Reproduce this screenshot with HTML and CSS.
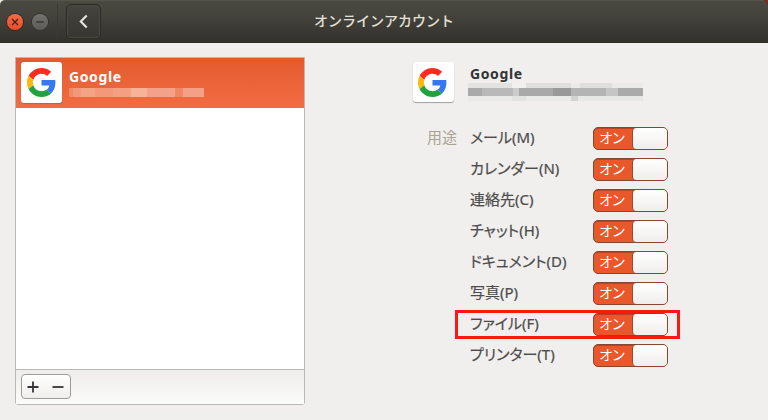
FILE: index.html
```html
<!DOCTYPE html>
<html lang="ja">
<head>
<meta charset="utf-8">
<title>オンラインアカウント</title>
<link rel="stylesheet" href="styles.css">
</head>
<body>
<svg class="defs" width="0" height="0" aria-hidden="true">
  <symbol id="google" viewBox="0 0 48 48">
    <path fill="#ff2a20" d="M24 9.5c3.54 0 6.71 1.22 9.21 3.6l6.85-6.85C35.9 2.38 30.47 0 24 0 14.62 0 6.51 5.38 2.56 13.22l7.98 6.19C12.43 13.72 17.74 9.5 24 9.5z"/>
    <path fill="#3577f5" d="M46.98 24.55c0-1.57-.15-3.09-.38-4.55H24v9.02h12.94c-.58 2.96-2.26 5.48-4.78 7.18l7.73 6c4.51-4.18 7.09-10.36 7.09-17.65z"/>
    <path fill="#fcb90d" d="M10.53 28.59c-.48-1.45-.76-2.99-.76-4.59s.27-3.14.76-4.59l-7.98-6.19C.92 16.46 0 20.12 0 24s.92 7.54 2.56 10.78l7.97-6.19z"/>
    <path fill="#22a13f" d="M24 48c6.48 0 11.93-2.13 15.89-5.81l-7.73-6c-2.15 1.45-4.92 2.3-8.16 2.3-6.26 0-11.57-4.22-13.47-9.91l-7.98 6.19C6.51 42.62 14.62 48 24 48z"/>
  </symbol>
</svg>
<header class="titlebar">
  <div class="controls">
    <span class="control close"><svg viewBox="0 0 16 16"><path d="M5 5l6 6M11 5l-6 6"/></svg></span>
    <span class="control minimize"><svg viewBox="0 0 16 16"><path d="M4 8h8"/></svg></span>
  </div>
  <button class="back"><svg viewBox="0 0 12 14"><path d="M9 1.5L3.5 7L9 12.5"/></svg></button>
  <h1 class="title">オンラインアカウント</h1>
</header>
<main class="content">
  <section class="sidebar">
    <div class="list">
      <div class="account selected">
        <span class="logo"><svg><use href="#google"/></svg></span>
        <div class="details"><strong class="name">Google</strong><span class="redacted light"></span></div>
      </div>
    </div>
    <div class="toolbar"><div class="buttons">
      <svg viewBox="0 0 12 12"><path d="M.5 6h11M6 .5v11"/></svg>
      <svg viewBox="0 0 12 12"><path d="M.5 6h11"/></svg>
    </div></div>
  </section>
  <section class="panel">
    <div class="account">
      <span class="logo"><svg><use href="#google"/></svg></span>
      <div class="details"><strong class="name">Google</strong><span class="redacted dark"></span></div>
    </div>
    <div class="services">
      <span class="caption">用途</span>
      <div class="rows">
        <div class="row"><span class="label">メール(M)</span><span class="switch"><b>オン</b><i></i></span></div>
        <div class="row"><span class="label">カレンダー(N)</span><span class="switch"><b>オン</b><i></i></span></div>
        <div class="row"><span class="label">連絡先(C)</span><span class="switch"><b>オン</b><i></i></span></div>
        <div class="row"><span class="label">チャット(H)</span><span class="switch"><b>オン</b><i></i></span></div>
        <div class="row"><span class="label">ドキュメント(D)</span><span class="switch"><b>オン</b><i></i></span></div>
        <div class="row"><span class="label">写真(P)</span><span class="switch"><b>オン</b><i></i></span></div>
        <div class="row marked"><span class="label">ファイル(F)</span><span class="switch"><b>オン</b><i></i></span></div>
        <div class="row"><span class="label">プリンター(T)</span><span class="switch"><b>オン</b><i></i></span></div>
      </div>
    </div>
  </section>
</main>
</body>
</html>
```
FILE: styles.css
```css
*, *::after { box-sizing: border-box; }
body { margin: 0; height: 420px; overflow: hidden; background: #f0efed; color: #4c4c4c; font: 15px/20px "Noto Sans", "Noto Sans CJK JP", sans-serif; }
.defs { position: absolute; }
svg { display: block; }
.titlebar { position: relative; height: 43px; display: flex; align-items: center; background: linear-gradient(#4a4941, #45443d 30%, #32312d); border-top: 1px solid #55544c; border-bottom: 1px solid #2c2b28; border-top-left-radius: 5px; }
.titlebar::after { content: ""; position: absolute; top: -1px; right: 0; width: 5px; height: 4px; background: #7b2c22; clip-path: polygon(0 0, 100% 0, 100% 100%); }
.controls { display: flex; gap: 9px; width: 58px; height: 35px; padding-left: 7px; align-items: center; border-right: 1px solid #3a3934; }
.control { width: 16px; height: 16px; border-radius: 50%; }
.control svg { width: 16px; height: 16px; fill: none; stroke: #43251c; stroke-width: 1.4; }
.close { background: linear-gradient(#f76b47, #ec4b27); box-shadow: 0 0 0 1px #3a2b24; }
.minimize { background: linear-gradient(#74736f, #5d5c58); box-shadow: 0 0 0 1px #363530; }
.minimize svg { stroke: #35342f; }
.back { width: 35px; height: 35px; margin: 0 0 0 8px; padding: 0; display: grid; place-items: center; background: linear-gradient(#45443e, #363530); border: 1px solid #2b2a26; border-radius: 5px; box-shadow: inset 0 0 0 1px #4a4943; }
.back svg { width: 13px; height: 15px; fill: none; stroke: #e5e4df; stroke-width: 2; }
.title { position: absolute; inset: 0; margin: 0; text-align: center; font-size: 14px; line-height: 40px; font-weight: 500; color: #e3e0d8; }
.content { display: flex; align-items: flex-start; padding: 14px 0 0 15px; }
.sidebar { width: 290px; height: 348px; border: 1px solid #bbb9b6; border-radius: 0 0 3px 3px; display: flex; flex-direction: column; }
.list { height: 312px; background: #fff; border-bottom: 1px solid #bbb9b6; }
.account { display: flex; }
.selected { height: 50px; padding: 4px 0 0 5px; background: linear-gradient(#e45a2e, #f26c43); color: #fff; }
.logo { width: 41px; height: 41px; display: grid; place-items: center; border-radius: 3px; background: #fff; box-shadow: 0 1px 1px #6f6b6899; flex: none; }
.logo svg { width: 29px; height: 29px; }
.details { display: flex; flex-direction: column; }
.name { font-size: 14px; line-height: 20px; letter-spacing: .6px; }
.selected .details { margin-left: 7px; padding-top: 5px; }
.redacted { display: block; filter: blur(.6px); }
.light { width: 135px; height: 9px; margin-top: 1px; background: linear-gradient(90deg, #ef8a66 0 4px, #f3997a 4px 12px, #f4a284 12px 26px, #f3997a 26px 44px, #f49f81 44px 62px, #f7b297 62px 78px, #f3a188 78px 106px, #ef8864 106px 114px, #f4a087 114px); }
.toolbar { flex: 1; padding: 4px 5px; background: linear-gradient(#eeedeb, #fbfbfa); }
.buttons { width: 50px; height: 25px; display: flex; align-items: center; gap: 13px; padding-left: 5px; border: 1px solid #9d9c99; border-radius: 4px; background: linear-gradient(#fff, #efeeec); }
.buttons svg { width: 12px; height: 12px; fill: none; stroke: #353438; stroke-width: 1.8; }
.panel { margin-left: 107.5px; padding-top: 5px; }
.panel .logo { height: 40px; }
.panel .logo svg { margin-right: 1px; }
.panel .account { height: 41px; }
.panel .details { margin-left: 16.5px; color: #333; padding-top: 2px; }
.dark { width: 175px; height: 18px; margin: -1px 0 0 -2px; background: linear-gradient(90deg, #aaa 0 14px, #b9b9b9 14px 45px, #ccc 45px 51px, #a9a9a9 51px 85px, #999 85px 103px, #b4b4b4 103px 138px, #c5c5c5 138px 150px, #aaa 150px) 0 5px / 100% 8px no-repeat, linear-gradient(90deg, #e2e2e1 0 44px, #f0f0ef 44px 58px, #dededd 58px 103px, #eaeae9 103px 112px, #dededd 112px 144px, #eaeae9 144px) 0 0 / 100% 5px no-repeat, linear-gradient(90deg, #eaeae9 0 44px, #e2e2e1 44px 58px, #eaeae9 58px 103px, #d2d2d1 103px 110px, #e7e7e6 110px) 0 13px / 100% 5px no-repeat; }
.services { display: flex; margin: 20px 0 0 14.5px; }
.caption { width: 43px; line-height: 28px; color: #aaa393; white-space: nowrap; }
.rows { width: 200px; }
.row { position: relative; display: flex; align-items: center; height: 31px; }
.label { width: 123px; padding-bottom: 3px; white-space: nowrap; font-feature-settings: "palt"; -webkit-text-stroke: .2px #4c4c4c; }
.switch { width: 75px; height: 23px; margin-bottom: 1px; display: flex; overflow: hidden; border: 1px solid #85472f; border-radius: 5px; background: #e8582b; box-shadow: inset 0 1px #b94424; }
.switch b { width: 38px; padding-right: 2px; text-align: center; font-weight: 400; font-size: 14px; line-height: 19px; color: #fff; font-feature-settings: "palt"; }
.switch i { width: 36px; margin-right: -1px; border: 1px solid #964a33; border-width: 0 0 0 1px; border-radius: 4px; background: linear-gradient(#fff, #efeeec); flex: none; }
.marked::after { content: ""; position: absolute; left: -15px; top: 1px; width: 225px; height: 29px; border: 3px solid #fa1714; }
```
